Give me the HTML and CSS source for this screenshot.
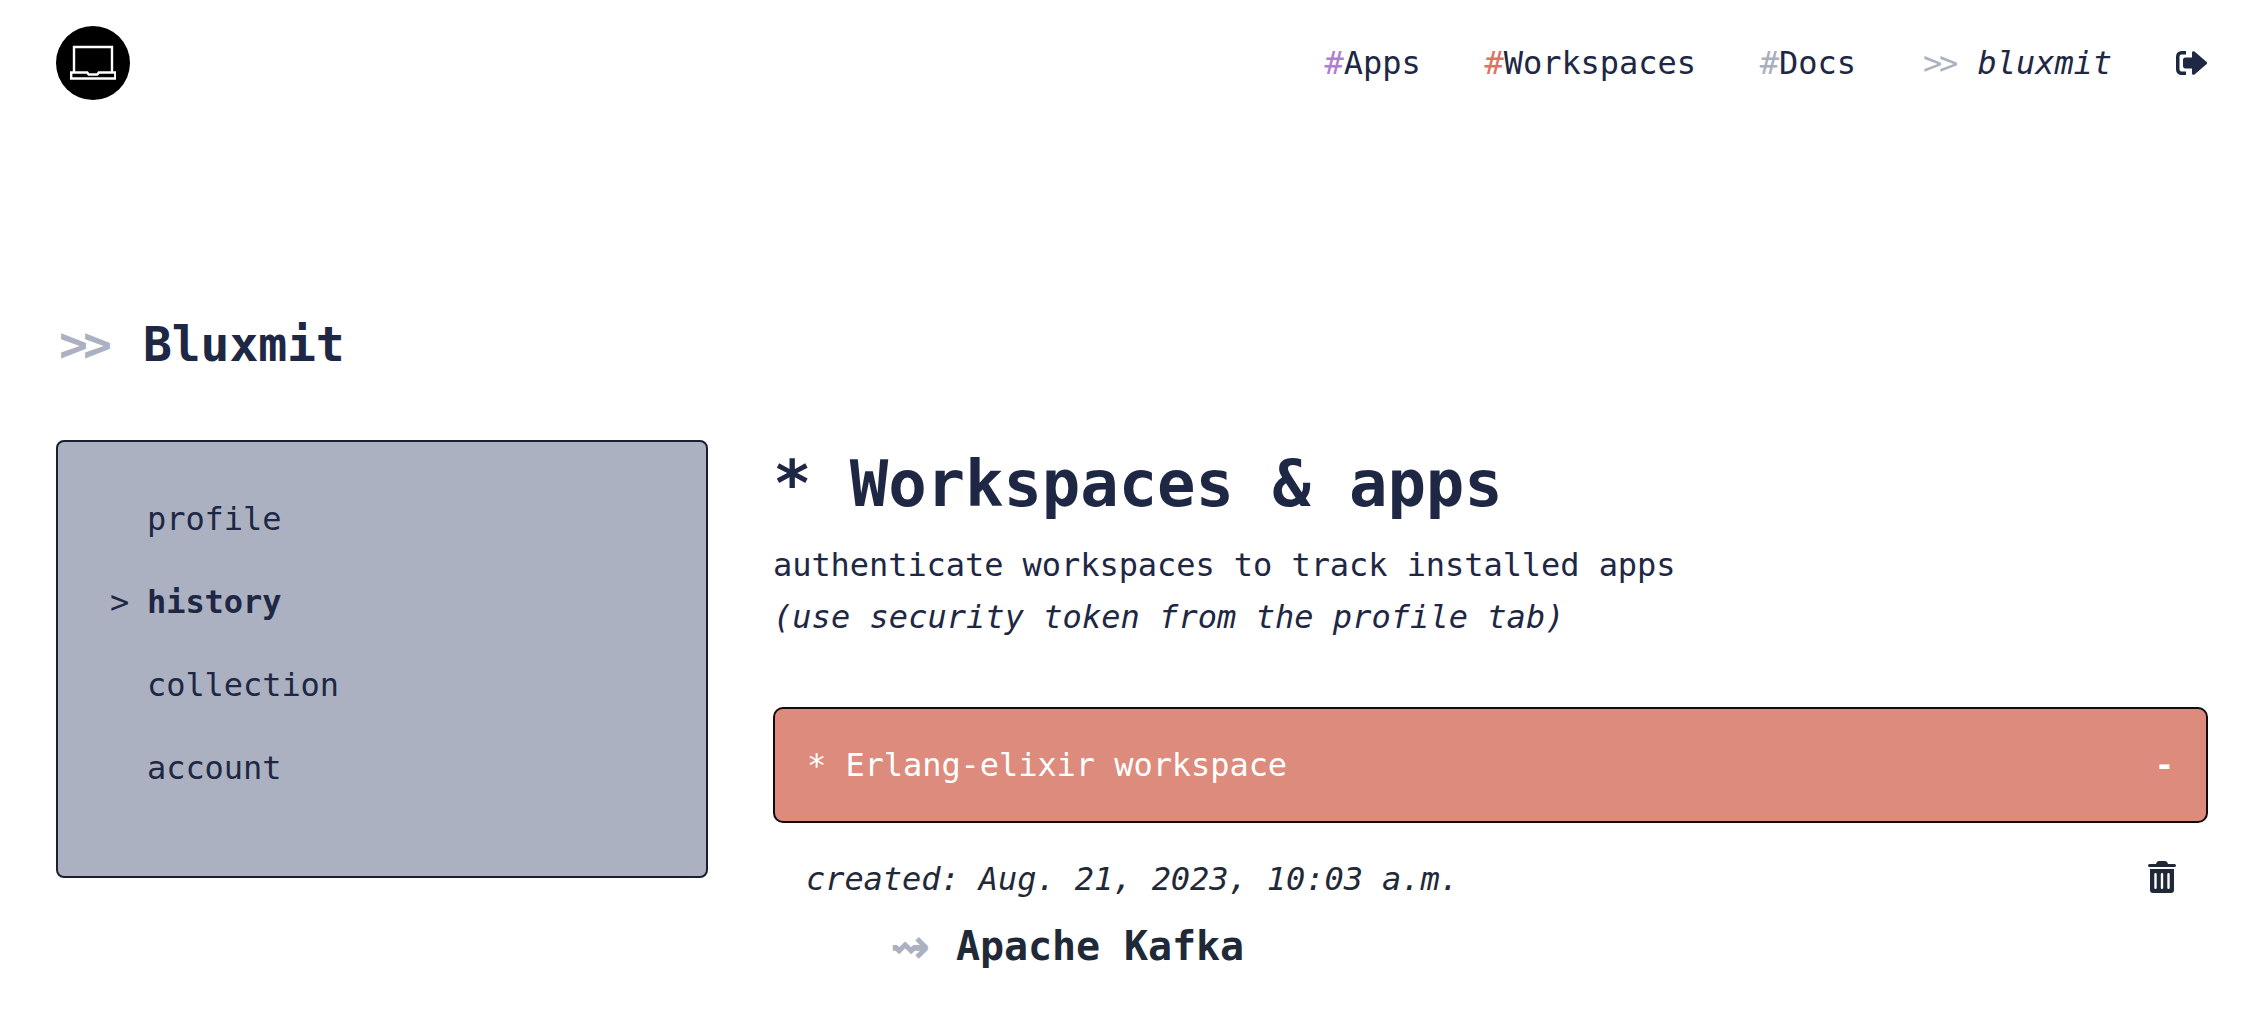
FILE: index.html
```html
<!DOCTYPE html>
<html lang="en">
<head>
<meta charset="utf-8">
<title>Bluxmit</title>
<link rel="stylesheet" href="styles.css">
</head>
<body>
<header class="topbar">
  <a class="logo" href="#">
    <svg viewBox="0 0 46 36" width="46" height="36" fill="none" stroke="#fff" stroke-width="2.400">
      <path d="M4 27V2h38v25"/>
      <path d="M1.200 27.500h16l1.500 2h8.600l1.500-2h16.500v6H1.200z"/>
    </svg>
  </a>
  <nav class="nav">
    <a class="nav-link" href="#"><span class="hash-purple">#</span>Apps</a>
    <a class="nav-link" href="#"><span class="hash-red">#</span>Workspaces</a>
    <a class="nav-link" href="#"><span class="hash-grey">#</span>Docs</a>
    <span class="nav-user"><span class="muted">&gt;&gt;</span> <em>bluxmit</em></span>
    <a class="nav-exit" href="#">
      <svg viewBox="0 0 31 24" width="31" height="24" fill="#1e2744">
        <path d="M10 0H5.500A5.500 5.500 0 0 0 0 5.500v13A5.500 5.500 0 0 0 5.500 24H10v-3.400H5.500a2 2 0 0 1-2-2v-13.200a2 2 0 0 1 2-2H10z"/>
        <path d="M18.500 .6 30.400 10.700a1.800 1.800 0 0 1 0 2.600L18.500 23.400c-1.100.9-2.500.2-2.500-1.200V17.500H9.200C8 17.500 7 16.500 7 15.300V8.700C7 7.500 8 6.500 9.200 6.500H16V1.800c0-1.400 1.400-2.100 2.500-1.200z"/>
      </svg>
    </a>
  </nav>
</header>

<h2 class="page-title"><span class="muted title-mark">&gt;&gt;</span> Bluxmit</h2>

<div class="layout">
  <aside class="sidebar">
    <a class="side-item" href="#"><span class="side-mark"></span>profile</a>
    <a class="side-item" href="#"><span class="side-mark">&gt;</span><b>history</b></a>
    <a class="side-item" href="#"><span class="side-mark"></span>collection</a>
    <a class="side-item" href="#"><span class="side-mark"></span>account</a>
  </aside>
  <main class="content">
    <h1 class="heading">* Workspaces &amp; apps</h1>
    <p class="intro">authenticate workspaces to track installed apps<br><em class="intro-note">(use security token from the profile tab)</em></p>
    <div class="panel">
      <span>* Erlang-elixir workspace</span>
      <span class="panel-toggle">-</span>
    </div>
    <div class="meta">
      <em>created: Aug. 21, 2023, 10:03 a.m.</em>
      <svg class="trash" viewBox="0 0 28 32" width="28" height="32" fill="#1f2937">
        <path fill-rule="evenodd" d="M8.500 1.800C8.900.7 9.900 0 11 0h6c1.100 0 2.100.7 2.500 1.800L20 3h6.500a1.500 1.500 0 0 1 0 3h-25a1.500 1.500 0 0 1 0-3H8zM2 8h24v21a3 3 0 0 1-3 3H5a3 3 0 0 1-3-3zm5.500 4a1.200 1.200 0 0 0-1.200 1.200v13.600a1.200 1.200 0 0 0 2.400 0V13.200A1.200 1.200 0 0 0 7.500 12zm6.500 0a1.200 1.200 0 0 0-1.200 1.200v13.600a1.200 1.200 0 0 0 2.400 0V13.200A1.200 1.200 0 0 0 14 12zm6.500 0a1.200 1.200 0 0 0-1.200 1.200v13.600a1.200 1.200 0 0 0 2.400 0V13.200a1.200 1.200 0 0 0-1.200-1.200z"/>
      </svg>
    </div>
    <div class="app-row"><span class="app-arrow">⇝</span><span class="app-name">Apache Kafka</span></div>
  </main>
</div>
</body>
</html>
```

FILE: styles.css
```css
* { box-sizing: border-box; }
html, body { margin: 0; }
body {
  height: 1028px;
  overflow: hidden;
  padding: 26px 54px 0 56px;
  background: #fff;
  color: #1e2744;
  font-family: "DejaVu Sans Mono", "Liberation Mono", monospace;
  font-size: 32px;
  letter-spacing: -.064px;
}
a { color: inherit; text-decoration: none; }

.topbar { display: flex; align-items: center; justify-content: space-between; height: 74px; }
.logo {
  width: 74px; height: 74px; border-radius: 50%;
  background: #000;
  display: flex; align-items: center; justify-content: center;
}
.nav { display: flex; align-items: center; gap: 64px; margin-right: 1px; }
.nav-exit { display: flex; }
.hash-purple { color: #b07fd1; }
.hash-red { color: #db7463; }
.hash-grey { color: #a9afbf; }
.muted { color: #abb1c1; letter-spacing: -.1em; margin: 0 .1em; }
.title-mark { margin-left: 3px; margin-right: 7px; }

.page-title {
  margin: 0;
  padding-top: 214px;
  font-size: 48px;
  line-height: 60px;
  font-weight: 700;
  letter-spacing: -.096px;
}

.layout { display: grid; grid-template-columns: 652px 1fr; gap: 65px; margin-top: 66px; }

.sidebar {
  height: 438px;
  background: #abb1c1;
  border: 2px solid #1a1f33;
  border-radius: 8px;
  padding: 53px 52px;
  display: flex; flex-direction: column; gap: 35px;
}
.side-item { display: flex; line-height: 48px; height: 48px; }
.side-mark { width: 37px; flex: none; }

.content { padding-top: 4px; }
.heading { margin: 0; font-size: 64px; line-height: 80px; font-weight: 700; letter-spacing: -.128px; }
.intro { margin: 15px 0 0; line-height: 52px; }
.intro-note { letter-spacing: .04px; }

.panel {
  margin-top: 64px;
  height: 116px;
  padding: 0 32px;
  display: flex; align-items: center; justify-content: space-between;
  background: #dd8b7c;
  border: 2px solid #14090c;
  border-radius: 10px;
  color: #fff;
}
.panel-toggle { font-weight: 700; }

.meta {
  display: flex; justify-content: space-between; align-items: center;
  padding: 0 32px 0 33px;
  margin-top: 37px;
  color: #1f2937;
}
.trash { margin-bottom: 5px; }
.app-row { display: flex; align-items: center; padding-left: 117px; margin-top: 24px; color: #1f2937; }
.app-arrow { width: 66px; flex: none; color: #abb1c1; font-family: "DejaVu Sans", sans-serif; font-size: 48px; font-weight: 700; line-height: 48px; }
.app-name { font-size: 40px; font-weight: 700; letter-spacing: -.08px; }
```
